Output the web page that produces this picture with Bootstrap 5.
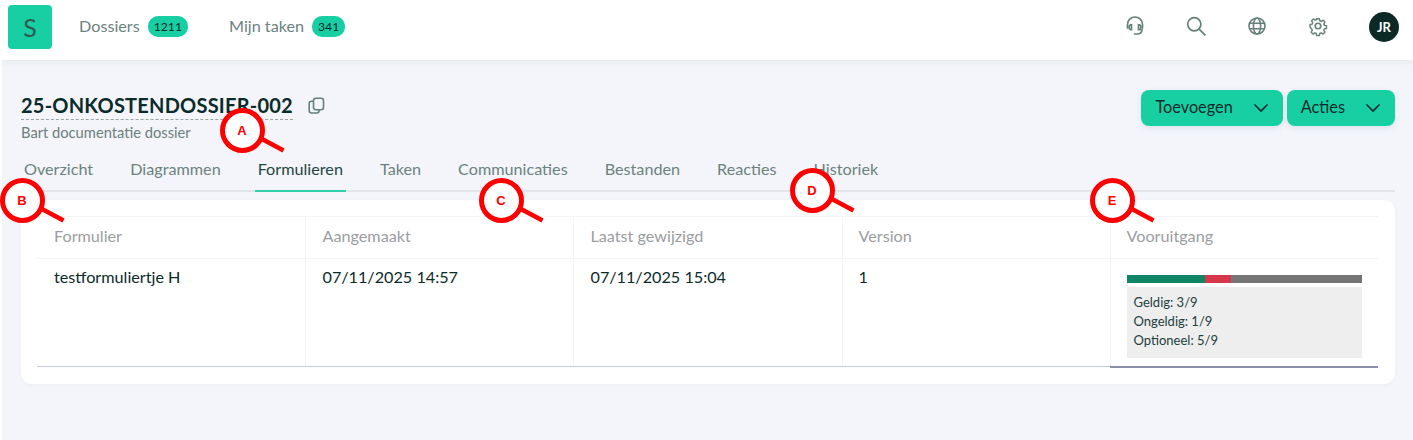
<!doctype html>
<html lang="nl"><head><meta charset="utf-8"><title>Dossier</title>
<link rel="stylesheet" href="https://cdn.jsdelivr.net/npm/bootstrap@5.3.0/dist/css/bootstrap.min.css">
<style>
html,body{height:440px;overflow:hidden}
body{font-family:Lato,sans-serif;background:#fff;color:#0b2a2a;font-size:16.2px;position:relative}
.page-bg{margin-left:2px;height:440px;background:#f3f5fa}
.top-bar{height:60px;background:#fff;box-shadow:0 2px 8px rgba(30,50,80,.07);padding:0 14px 6px 8px;position:relative;margin-left:-2px}
.logo-box{width:44px;height:44px;background:#18cfa3;border-radius:4px;color:#2f5a52;font-size:25px;line-height:44px;text-align:center}
.nav-group{margin-left:27px;margin-bottom:2px}
.top-link{color:#6c827e;margin-right:8px;line-height:24px}
.top-pill{background:#18cfa3;color:#0b2a2a;font-size:12.2px;font-weight:400;border-radius:10px;height:21px;line-height:21px;padding:0 6px;margin-right:41px}
.top-icon{width:22px;height:22px;color:#66807a;margin-bottom:2px}
.icon-gap{gap:39px}
.avatar{width:30px;height:30px;border-radius:50%;background:#0b2a26;color:#fff;font-size:13px;font-weight:700;line-height:30px;text-align:center;margin-left:1px}
.content-area{padding:30px 18px 0 19px}
.doc-title{font-size:20px;font-weight:700;line-height:31px;letter-spacing:.22px;color:#0b2a2a;border-bottom:1px dashed #9aa5a3;height:30px}
.doc-sub{font-size:14.7px;color:#6c7f7c;line-height:20px;margin-top:2px;margin-bottom:1px}
.copy-icon{width:17px;height:17px;color:#66807a;margin-left:15px;margin-top:7px}
.action-btn{background:#18cfa3;border:0;color:#0b2a2a;border-radius:8px;height:36px;padding:0 14px 2px;font-size:16.3px;box-shadow:0 2px 6px rgba(30,50,80,.1)}
.action-btn:hover{background:#18cfa3;color:#0b2a2a}
.action-btn svg{width:16px;height:10px;margin-left:20px;margin-top:2px}
.btn-row{gap:4px;margin-top:0}
.tab-row{border-bottom:2px solid #e2e4ea;gap:31px;height:41px;margin-top:8px}
.tab-item{color:#6c827e;padding:6px 3px 0;height:41px;line-height:24px}
.tab-item.is-on{color:#24453f;border-bottom:2px solid #2fd0aa}
.data-card{background:#fff;border-radius:10px;margin-top:8px;padding:16px 17px 18px 16px;height:184px;box-shadow:0 1px 4px rgba(30,50,80,.04)}
.data-table{width:1341px;table-layout:fixed;margin:0;border-collapse:collapse;--bs-table-bg:transparent}
.data-table th,.data-table td{border:0;border-right:1px solid #f3f4f6;padding:0 16px;font-weight:400;vertical-align:top;color:#0b2a2a;width:268px}
.data-table th:first-child,.data-table td:first-child,.data-table th:nth-child(2),.data-table td:nth-child(2){padding-left:17px}
.data-table th:nth-child(3),.data-table td:nth-child(3){width:269px;padding-left:17px}
.data-table th:last-child,.data-table td:last-child{border-right:0}
.data-table th{color:#9a9d9f;height:42px;line-height:38px;border-top:1px solid #f3f4f6;border-bottom:1px solid #f3f4f6}
.data-table td{height:108px;padding-top:6px;line-height:24px;border-bottom:1px solid #c6cade}
.data-table td:last-child{border-bottom:2px solid #8a8dab;padding-top:16px}
.bar-track{height:8px;border-radius:0;background:#757575;width:235px}
.bar-ok{background:#0f8566}
.bar-bad{background:#d63649}
.stat-box{background:#eee;width:235px;height:71px;margin-top:4px;padding:6px 7px;font-size:13px;line-height:19px;color:#23403d}
.marker{position:absolute;width:70px;height:50px;pointer-events:none}
.marker b{position:absolute;left:0;top:0;width:45px;text-align:center;color:#f00;font:700 13px/46px "Liberation Sans",sans-serif}
.m-a{left:219.500px;top:107.500px}.m-b{left:-.5px;top:178px}.m-c{left:478.500px;top:177.500px}.m-d{left:789.500px;top:167.500px}.m-e{left:1089.500px;top:177.500px}
</style></head><body>
<div class="page-bg">
<nav class="top-bar d-flex align-items-center">
  <div class="logo-box">S</div>
  <div class="d-flex align-items-center nav-group"><span class="top-link">Dossiers</span><span class="badge top-pill">1211</span><span class="top-link">Mijn taken</span><span class="badge top-pill">341</span></div>
  <div class="d-flex align-items-center icon-gap ms-auto">
    <svg class="top-icon" viewBox="0 0 22 22" fill="none" stroke="currentColor" stroke-width="1.7" stroke-linecap="round"><path d="M3.500 13V9.500a7.500 7.500 0 0 1 15 0V13"/><path d="M7.500 9.800H6.900a1.700 1.700 0 0 0-1.700 1.700v1.500a1.700 1.700 0 0 0 1.700 1.700h.6zM14.500 9.800h.6a1.700 1.700 0 0 1 1.700 1.700v1.500a1.700 1.700 0 0 1-1.700 1.700h-.6z"/><path d="M18 14.500c0 3-2.200 4.500-5 4.500h-2.500"/></svg>
    <svg class="top-icon" viewBox="0 0 22 22" fill="none" stroke="currentColor" stroke-width="1.7" stroke-linecap="round"><circle cx="9.300" cy="9.300" r="6.600"/><path d="M14.200 14.200l5.600 5.600"/></svg>
    <svg class="top-icon" viewBox="0 0 22 22" fill="none" stroke="currentColor" stroke-width="1.6"><circle cx="11" cy="11" r="8"/><ellipse cx="11" cy="11" rx="3.600" ry="8"/><path d="M3.200 8.200h15.600M3.200 13.800h15.600"/></svg>
    <svg class="top-icon" viewBox="0 0 24 24" fill="none" stroke="currentColor" stroke-width="1.8" stroke-linejoin="round"><circle cx="12" cy="12" r="3"/><path d="M10.300 3h3.400l.5 2.600 1.900.8 2.200-1.500 2.400 2.400-1.500 2.200.8 1.900 2.600.5v3.400l-2.600.5-.8 1.900 1.500 2.200-2.400 2.400-2.200-1.500-1.900.8-.5 2.600h-3.400l-.5-2.600-1.900-.8-2.200 1.500-2.400-2.400 1.500-2.200-.8-1.900L2 13.700v-3.400l2.600-.5.8-1.900-1.500-2.200 2.400-2.400 2.200 1.500 1.900-.8z" transform="translate(1.600 1.400) scale(.87)"/></svg>
    <div class="avatar">JR</div>
  </div>
</nav>
<main class="content-area">
  <div class="d-flex justify-content-between align-items-start">
    <div>
      <div class="d-flex align-items-start"><div class="doc-title">25-ONKOSTENDOSSIER-002</div>
      <svg class="copy-icon" viewBox="0 0 17 17" fill="none" stroke="currentColor" stroke-width="1.6" stroke-linejoin="round"><rect x="5.500" y="1.200" width="10" height="11.500" rx="2.400"/><path d="M5.500 4.200H3.600a2.400 2.400 0 0 0-2.400 2.400v7a2.400 2.400 0 0 0 2.400 2.400h5a2.400 2.400 0 0 0 2.400-2.400v-.9"/></svg></div>
      <div class="doc-sub">Bart documentatie dossier</div>
    </div>
    <div class="d-flex btn-row">
      <button class="btn action-btn d-flex align-items-center">Toevoegen<svg viewBox="0 0 16 10" fill="none" stroke="currentColor" stroke-width="1.6"><path d="M1.500 1.500L8 8l6.500-6.500"/></svg></button>
      <button class="btn action-btn d-flex align-items-center">Acties<svg viewBox="0 0 16 10" fill="none" stroke="currentColor" stroke-width="1.6"><path d="M1.500 1.500L8 8l6.500-6.500"/></svg></button>
    </div>
  </div>
  <div class="d-flex tab-row">
    <div class="tab-item">Overzicht</div><div class="tab-item">Diagrammen</div><div class="tab-item is-on">Formulieren</div><div class="tab-item">Taken</div><div class="tab-item">Communicaties</div><div class="tab-item">Bestanden</div><div class="tab-item">Reacties</div><div class="tab-item">Historiek</div>
  </div>
  <section class="data-card">
    <table class="table data-table">
      <thead><tr><th>Formulier</th><th>Aangemaakt</th><th>Laatst gewijzigd</th><th>Version</th><th>Vooruitgang</th></tr></thead>
      <tbody><tr><td>testformuliertje H</td><td>07/11/2025 14:57</td><td>07/11/2025 15:04</td><td>1</td>
      <td><div class="d-flex bar-track"><div class="bar-ok" style="width:33.33%"></div><div class="bar-bad" style="width:11.11%"></div></div>
      <div class="stat-box">Geldig: 3/9<br>Ongeldig: 1/9<br>Optioneel: 5/9</div></td></tr></tbody>
    </table>
  </section>
</main>
</div>
<div class="marker m-a"><svg width="70" height="50" viewBox="0 0 70 50"><circle cx="22.500" cy="22.500" r="20" fill="#fff" stroke="#f00" stroke-width="5"/><path d="M41 30.500l22.500 12" stroke="#f00" stroke-width="4.500"/></svg><b>A</b></div>
<div class="marker m-b"><svg width="70" height="50" viewBox="0 0 70 50"><circle cx="22.500" cy="22.500" r="20" fill="#fff" stroke="#f00" stroke-width="5"/><path d="M41 30.500l22.500 12" stroke="#f00" stroke-width="4.500"/></svg><b>B</b></div>
<div class="marker m-c"><svg width="70" height="50" viewBox="0 0 70 50"><circle cx="22.500" cy="22.500" r="20" fill="#fff" stroke="#f00" stroke-width="5"/><path d="M41 30.500l22.500 12" stroke="#f00" stroke-width="4.500"/></svg><b>C</b></div>
<div class="marker m-d"><svg width="70" height="50" viewBox="0 0 70 50"><circle cx="22.500" cy="22.500" r="20" fill="#fff" stroke="#f00" stroke-width="5"/><path d="M41 30.500l22.500 12" stroke="#f00" stroke-width="4.500"/></svg><b>D</b></div>
<div class="marker m-e"><svg width="70" height="50" viewBox="0 0 70 50"><circle cx="22.500" cy="22.500" r="20" fill="#fff" stroke="#f00" stroke-width="5"/><path d="M41 30.500l22.500 12" stroke="#f00" stroke-width="4.500"/></svg><b>E</b></div>
<script src="https://cdn.jsdelivr.net/npm/bootstrap@5.3.0/dist/js/bootstrap.bundle.min.js"></script>
</body></html>
